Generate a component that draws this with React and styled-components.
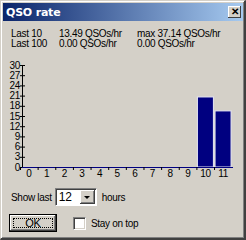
import React from 'react';
import styled, {createGlobalStyle} from 'styled-components';

const Global = createGlobalStyle`
    html, body { margin: 0; padding: 0; background: #d4d0c8; }
    body { font-family: "Liberation Sans", Arial, sans-serif; font-size: 10px; letter-spacing: -0.3px; color: #000; }
`;

const Window = styled.div`
    width: 246px;
    height: 240px;
    box-sizing: border-box;
    background: #d4d0c8;
    border-top: 1px solid #d4d0c8;
    border-left: 1px solid #d4d0c8;
    border-right: 2px solid #404040;
    border-bottom: 2px solid #404040;
    box-shadow: inset 1px 1px 0 #fff, inset -1px -1px 0 #808080;
    display: flex;
    flex-direction: column;
    overflow: hidden;
`;

const TitleBar = styled.div`
    height: 18px;
    margin: 2px 1px 0 2px;
    background: linear-gradient(to right, #0a246a, #a6caf0);
    display: flex;
    align-items: center;
    justify-content: space-between;
    padding: 0 2px 0 3px;
`;

const Title = styled.span`
    color: #fff;
    font-weight: bold;
    font-family: "DejaVu Sans", Verdana, sans-serif;
    font-size: 11px;
    letter-spacing: -0.2px;
`;

const CloseBtn = styled.div`
    width: 13px;
    height: 12px;
    background: #d4d0c8;
    box-shadow: inset -1px -1px 0 #404040, inset 1px 1px 0 #fff;
    display: flex;
    align-items: center;
    justify-content: center;
    font-weight: bold;
    font-size: 10px;
    letter-spacing: 0;
    line-height: 1;
`;

const Stats = styled.div`
    display: grid;
    grid-template-columns: 48px 78px auto;
    padding: 8px 0 0 10px;
    line-height: 10px;
    white-space: nowrap;
`;

const Chart = styled.svg`
    display: block;
    margin-top: 2px;
`;

const Row = styled.div`
    display: flex;
    align-items: center;
    padding-left: ${p => p.$left}px;
    margin-top: ${p => p.$top}px;
`;

const Label = styled.span`
    margin-right: ${p => p.$gap || 0}px;
`;

const Combo = styled.div`
    width: 42px;
    height: 18px;
    box-sizing: border-box;
    background: #fff;
    border-top: 1px solid #808080;
    border-left: 1px solid #808080;
    border-right: 1px solid #fff;
    border-bottom: 1px solid #fff;
    box-shadow: inset 1px 1px 0 #404040;
    display: flex;
    align-items: center;
    justify-content: space-between;
    margin-right: 5px;
    font-size: 12px;
    letter-spacing: 0;
`;

const ComboText = styled.span`
    padding-left: 3px;
`;

const Arrow = styled.div`
    width: 15px;
    height: 14px;
    margin-right: 1px;
    background: #d4d0c8;
    box-shadow: inset -1px -1px 0 #404040, inset 1px 1px 0 #fff, inset -2px -2px 0 #808080;
    display: flex;
    align-items: center;
    justify-content: center;
    &::after {
        content: '';
        border-left: 3px solid transparent;
        border-right: 3px solid transparent;
        border-top: 3px solid #000;
    }
`;

const Button = styled.div`
    width: 48px;
    height: 18px;
    box-sizing: border-box;
    border: 1px solid #000;
    background: #d4d0c8;
    box-shadow: inset -1px -1px 0 #404040, inset 1px 1px 0 #fff, inset -2px -2px 0 #808080;
    display: flex;
    align-items: center;
    justify-content: center;
    margin-right: 16px;
    position: relative;
    font-size: 11px;
    &::after {
        content: '';
        position: absolute;
        inset: 3px;
        border: 1px dotted #000;
    }
`;

const Check = styled.div`
    width: 13px;
    height: 13px;
    box-sizing: border-box;
    background: #fff;
    border-top: 1px solid #808080;
    border-left: 1px solid #808080;
    border-right: 1px solid #fff;
    border-bottom: 1px solid #fff;
    box-shadow: inset 1px 1px 0 #404040, inset -1px -1px 0 #d4d0c8;
    margin-right: 5px;
`;

const rates = [0, 0, 0, 0, 0, 0, 0, 0, 0, 0, 20.6, 16.5];

const QsoChart = () => {
    const base = 116;
    const scale = 3.4;
    const xAt = i => 28 + i * 17.64;
    const ticks = [30, 27, 24, 21, 18, 15, 12, 9, 6, 3, 0];
    return (
        <Chart width="244" height="132" viewBox="0 0 244 132">
            {rates.map((v, i) => v > 0 && (
                <rect key={i} x={xAt(i) - 8} y={base - v * scale} width="16" height={v * scale}
                    fill="#000080" stroke="#e8e8f4" strokeWidth="1" />
            ))}
            <line x1="21.5" y1={base - 30 * scale} x2="21.5" y2={base} stroke="#000" />
            {ticks.map(t => (
                <g key={t}>
                    <line x1="19" x2="24" y1={base - t * scale + 0.5} y2={base - t * scale + 0.5} stroke="#000" />
                    <text x="19" y={base - t * scale + 3.5} textAnchor="end" fontSize="10"
                        fontFamily="Liberation Sans, Arial, sans-serif">{t}</text>
                </g>
            ))}
            <line x1="21" y1={base + 0.5} x2="232" y2={base + 0.5} stroke="#000080" />
            {rates.map((v, i) => (
                <g key={i}>
                    <line x1={xAt(i) - 8.5} x2={xAt(i) - 8.5} y1={base} y2={base + 3} stroke="#000" />
                    <text x={xAt(i)} y={base + 10} textAnchor="middle" fontSize="10"
                        fontFamily="Liberation Sans, Arial, sans-serif">{i}</text>
                </g>
            ))}
        </Chart>
    );
};

const App = () => {
    return (
        <Window>
            <Global />
            <TitleBar>
                <Title>QSO rate</Title>
                <CloseBtn>✕</CloseBtn>
            </TitleBar>
            <Stats>
                <span>Last 10</span><span>13.49 QSOs/hr</span><span>max 37.14 QSOs/hr</span>
                <span>Last 100</span><span>0.00 QSOs/hr</span><span>0.00 QSOs/hr</span>
            </Stats>
            <QsoChart />
            <Row $top={5} $left={10}>
                <Label $gap={3}>Show last</Label>
                <Combo>
                    <ComboText>12</ComboText>
                    <Arrow />
                </Combo>
                <Label>hours</Label>
            </Row>
            <Row $top={8} $left={8}>
                <Button>OK</Button>
                <Check />
                <Label>Stay on top</Label>
            </Row>
        </Window>
    );
};

export default App;
